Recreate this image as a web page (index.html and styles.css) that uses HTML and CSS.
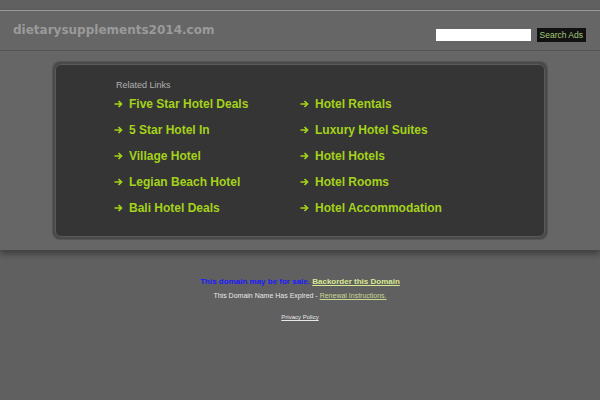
FILE: index.html
```html
<!DOCTYPE html>
<html>
<head>
<meta charset="utf-8">
<link rel="stylesheet" href="styles.css">
</head>
<body>
<div class="top">
  <div class="header">
    <div class="domain">dietarysupplements2014.com</div>
    <form class="search">
      <input type="text" class="search-input">
      <span class="search-btn">Search Ads</span>
    </form>
  </div>
  <div class="main">
    <div class="box">
      <div class="box-inner">
        <div class="related">Related Links</div>
        <div class="links">
          <a class="link"><svg class="arr" width="9" height="8" viewBox="0 0 9 8"><path d="M0.5 4H7.5M4.5 1L7.5 4L4.5 7"/></svg>Five Star Hotel Deals</a>
          <a class="link"><svg class="arr" width="9" height="8" viewBox="0 0 9 8"><path d="M0.5 4H7.5M4.5 1L7.5 4L4.5 7"/></svg>Hotel Rentals</a>
          <a class="link"><svg class="arr" width="9" height="8" viewBox="0 0 9 8"><path d="M0.5 4H7.5M4.5 1L7.5 4L4.5 7"/></svg>5 Star Hotel In</a>
          <a class="link"><svg class="arr" width="9" height="8" viewBox="0 0 9 8"><path d="M0.5 4H7.5M4.5 1L7.5 4L4.5 7"/></svg>Luxury Hotel Suites</a>
          <a class="link"><svg class="arr" width="9" height="8" viewBox="0 0 9 8"><path d="M0.5 4H7.5M4.5 1L7.5 4L4.5 7"/></svg>Village Hotel</a>
          <a class="link"><svg class="arr" width="9" height="8" viewBox="0 0 9 8"><path d="M0.5 4H7.5M4.5 1L7.5 4L4.5 7"/></svg>Hotel Hotels</a>
          <a class="link"><svg class="arr" width="9" height="8" viewBox="0 0 9 8"><path d="M0.5 4H7.5M4.5 1L7.5 4L4.5 7"/></svg>Legian Beach Hotel</a>
          <a class="link"><svg class="arr" width="9" height="8" viewBox="0 0 9 8"><path d="M0.5 4H7.5M4.5 1L7.5 4L4.5 7"/></svg>Hotel Rooms</a>
          <a class="link"><svg class="arr" width="9" height="8" viewBox="0 0 9 8"><path d="M0.5 4H7.5M4.5 1L7.5 4L4.5 7"/></svg>Bali Hotel Deals</a>
          <a class="link"><svg class="arr" width="9" height="8" viewBox="0 0 9 8"><path d="M0.5 4H7.5M4.5 1L7.5 4L4.5 7"/></svg>Hotel Accommodation</a>
        </div>
      </div>
    </div>
  </div>
</div>
<div class="footer">
  <div class="sale"><span class="blue">This domain may be for sale.</span> <a class="backorder">Backorder this Domain</a></div>
  <div class="expired">This Domain Name Has Expired - <a class="renew">Renewal Instructions.</a></div>
  <div class="privacy"><a>Privacy Policy</a></div>
</div>
</body>
</html>
```
FILE: styles.css
```css
html, body {
  margin: 0;
  padding: 0;
}
body {
  background: #606060;
  font-family: "Liberation Sans", Arial, sans-serif;
  width: 600px;
  height: 400px;
  overflow: hidden;
}
.top {
  background: #666666;
  margin-top: 10px;
  border-top: 1px solid #9a9a9a;
  box-shadow: 0 4px 6px rgba(0,0,0,0.35);
}
.header {
  height: 39px;
  border-bottom: 1px solid #545454;
  display: flex;
  align-items: center;
  justify-content: space-between;
  padding: 0 14px 0 13px;
}
.domain {
  font-family: "DejaVu Sans", sans-serif;
  font-weight: bold;
  font-size: 12px;
  color: #9a9a9a;
  margin-top: -1px;
}
.search {
  display: flex;
  align-items: center;
  gap: 6px;
  margin: 0;
  padding-top: 8px;
}
.search-input {
  width: 95px;
  height: 12px;
  box-sizing: border-box;
  border: none;
  background: #fff;
  padding: 0;
  margin: 0;
}
.search-btn {
  background: #111;
  color: #a8c87a;
  font-size: 8.5px;
  padding: 2px 3px;
  line-height: 10px;
}
.main {
  padding: 11px 53px 11px 53px;
}
.box {
  border-radius: 7px;
  background: #4a4a4a;
  padding: 2px;
  box-shadow: 0 0 0 1px #555;
}
.box-inner {
  background: #353535;
  border-radius: 6px;
  border: 1px solid #5a5a5a;
  height: 173px;
  box-sizing: border-box;
  padding: 15px 0 0 58px;
}
.related {
  font-size: 9px;
  color: #b0b0b0;
  line-height: 11px;
  margin-left: 2px;
}
.links {
  display: grid;
  grid-template-columns: 186px auto;
  grid-auto-rows: 26px;
  margin-top: 4px;
}
.link {
  font-weight: bold;
  font-size: 12px;
  color: #a4d21a;
  line-height: 18px;
  height: 18px;
  display: flex;
  align-items: center;
}
.arr {
  fill: none;
  stroke: #a4d21a;
  stroke-width: 1.7;
  margin-right: 6px;
  flex: none;
}
.footer {
  text-align: center;
  padding-top: 27px;
}
.sale {
  font-size: 8px;
  font-weight: bold;
  line-height: 10px;
}
.blue {
  color: #1a1aff;
}
.backorder {
  color: #d8e890;
  text-decoration: underline;
}
.expired {
  font-size: 7px;
  color: #e8e8e8;
  margin-top: 4px;
  line-height: 9px;
}
.renew {
  color: #c8d890;
  text-decoration: underline;
}
.privacy {
  font-size: 6px;
  color: #e8e8e8;
  margin-top: 14px;
  text-decoration: underline;
}
```
